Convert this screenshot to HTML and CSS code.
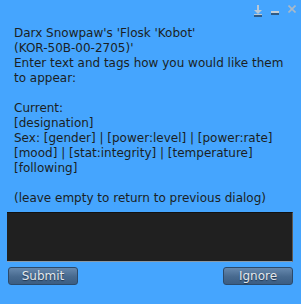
FILE: index.html
```html
<!DOCTYPE html>
<html>
<head>
    <title>Text entry</title>
    <link rel="stylesheet" href="styles.css">
</head>
<body>
    <div class="dialog">
        <div class="titlebar">
            <svg class="icon" width="8" height="12" viewBox="0 0 8 12">
                <rect x="3" y="0" width="2" height="5" fill="#b9c8d6"/>
                <path d="M0 5 H8 L4 9 Z" fill="#b9c8d6"/>
                <rect x="0" y="9" width="8" height="1" fill="#b9c8d6"/>
                <rect x="0" y="10" width="8" height="2" fill="#2f5a85"/>
            </svg>
            <svg class="icon" width="8" height="4" viewBox="0 0 8 4">
                <rect x="0" y="0" width="8" height="2" fill="#c4cfd8"/>
                <rect x="0" y="2" width="8" height="2" fill="#2f5a85"/>
            </svg>
            <svg class="icon close" width="8" height="8" viewBox="0 0 8 8">
                <path d="M0.5 0.5 L7.5 7.5 M7.5 0.5 L0.5 7.5" stroke="#a9b9c8" stroke-width="1.6"/>
            </svg>
        </div>
        <div class="message">Darx Snowpaw's 'Flosk 'Kobot'
(KOR-50B-00-2705)'
Enter text and tags how you would like them
to appear:

Current:
[designation]
Sex: [gender] | [power:level] | [power:rate]
[mood] | [stat:integrity] | [temperature]
[following]

(leave empty to return to previous dialog)</div>
        <div class="entry"></div>
        <div class="buttons">
            <button class="btn">Submit</button>
            <button class="btn">Ignore</button>
        </div>
    </div>
</body>
</html>
```

FILE: styles.css
```css
html,
body {
    margin: 0;
    height: 100%;
    background: #45a5fe;
}

.dialog {
    font-family: "DejaVu Sans", sans-serif;
    font-size: 12px;
    color: #1b1f24;
}

.titlebar {
    height: 26px;
    display: flex;
    align-items: flex-start;
    justify-content: flex-end;
    padding-right: 5px;
    box-sizing: border-box;
}

.icon {
    display: block;
}

.titlebar .icon:nth-child(1) {
    margin-top: 5px;
    margin-right: 9px;
}

.titlebar .icon:nth-child(2) {
    margin-top: 11px;
    margin-right: 9px;
}

.titlebar .icon.close {
    margin-top: 5px;
}

.message {
    white-space: pre-line;
    line-height: 15px;
    padding-left: 14px;
}

.entry {
    height: 50px;
    margin: 6px 8px 0 7px;
    background: #202020;
    border-top: 1px solid #111;
    border-right: 1px solid #5c5852;
    border-bottom: 1px solid #8a9aa8;
    box-sizing: border-box;
}

.buttons {
    display: flex;
    justify-content: space-between;
    margin: 5px 8px 0 8px;
}

.btn {
    width: 70px;
    height: 18px;
    padding: 0;
    font-family: "DejaVu Sans", sans-serif;
    font-size: 12px;
    color: #e4e8ec;
    text-shadow: 0 1px 1px #1e3550;
    background: linear-gradient(#6688ad, #47698e 55%, #3b5d82);
    border: 1px solid #2c4a6a;
    border-radius: 3px;
}
```
